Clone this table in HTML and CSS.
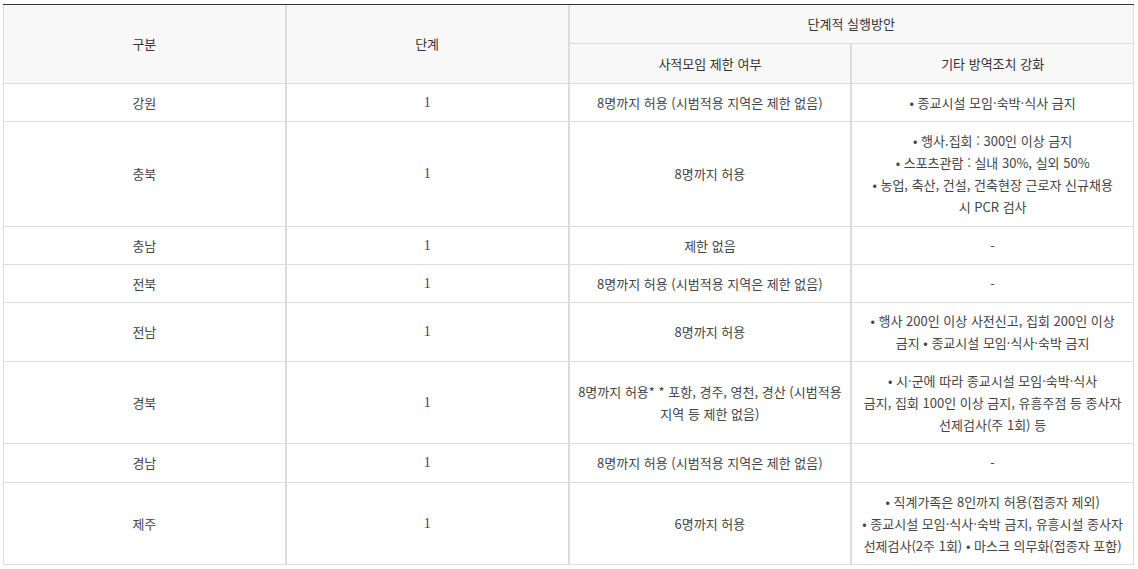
FILE: index.html
```html
<!DOCTYPE html>
<html lang="ko">
<head>
<meta charset="utf-8">
<title>단계적 실행방안</title>
<link rel="stylesheet" href="styles.css">
</head>
<body>
<table class="tbl">
  <colgroup><col class="c"><col class="c"><col class="c"><col class="c"></colgroup>
  <thead>
    <tr class="h1">
      <th rowspan="2">구분</th>
      <th rowspan="2">단계</th>
      <th colspan="2">단계적 실행방안</th>
    </tr>
    <tr class="h2">
      <th>사적모임 제한 여부</th>
      <th>기타 방역조치 강화</th>
    </tr>
  </thead>
  <tbody>
    <tr class="r38">
      <td>강원</td><td class="num">1</td>
      <td>8명까지 허용 (시범적용 지역은 제한 없음)</td>
      <td>• 종교시설 모임·숙박·식사 금지</td>
    </tr>
    <tr class="r105">
      <td>충북</td><td class="num">1</td>
      <td>8명까지 허용</td>
      <td>• 행사.집회 : 300인 이상 금지<br>• 스포츠관람 : 실내 30%, 실외 50%<br>• 농업, 축산, 건설, 건축현장 근로자 신규채용<br>시 PCR 검사</td>
    </tr>
    <tr class="r38">
      <td>충남</td><td class="num">1</td>
      <td>제한 없음</td>
      <td>-</td>
    </tr>
    <tr class="r38">
      <td>전북</td><td class="num">1</td>
      <td>8명까지 허용 (시범적용 지역은 제한 없음)</td>
      <td>-</td>
    </tr>
    <tr class="r59">
      <td>전남</td><td class="num">1</td>
      <td>8명까지 허용</td>
      <td>• 행사 200인 이상 사전신고, 집회 200인 이상<br>금지 • 종교시설 모임·식사·숙박 금지</td>
    </tr>
    <tr class="r82">
      <td>경북</td><td class="num">1</td>
      <td>8명까지 허용* * 포항, 경주, 영천, 경산 (시범적용<br>지역 등 제한 없음)</td>
      <td>• 시·군에 따라 종교시설 모임·숙박·식사<br>금지, 집회 100인 이상 금지, 유흥주점 등 종사자<br>선제검사(주 1회) 등</td>
    </tr>
    <tr class="r39">
      <td>경남</td><td class="num">1</td>
      <td>8명까지 허용 (시범적용 지역은 제한 없음)</td>
      <td>-</td>
    </tr>
    <tr class="r82">
      <td>제주</td><td class="num">1</td>
      <td>6명까지 허용</td>
      <td>• 직계가족은 8인까지 허용(접종자 제외)<br>• 종교시설 모임·식사·숙박 금지, 유흥시설 종사자<br>선제검사(2주 1회) • 마스크 의무화(접종자 포함)</td>
    </tr>
  </tbody>
</table>
</body>
</html>
```

FILE: styles.css
```css
html, body {
  margin: 0;
  padding: 0;
  background: #fff;
}
body {
  padding: 4px 0 0 3px;
  font-family: "Noto Sans CJK KR", "Noto Sans", sans-serif;
  font-size: 13px;
  color: #444;
}
.tbl {
  width: 1131px;
  table-layout: fixed;
  border-collapse: separate;
  border-spacing: 0;
  border-top: 1px solid #333;
}
.tbl .c {
  width: 25%;
}
.tbl th,
.tbl td {
  box-sizing: border-box;
  text-align: center;
  vertical-align: middle;
  border-bottom: 1px solid #dcdcdc;
  border-left: 1px solid #dcdcdc;
  border-right: 1px solid #dcdcdc;
  padding: 0 6px;
  line-height: 22px;
  white-space: nowrap;
}
.tbl th {
  background: #f8f8f8;
  font-weight: normal;
  color: #333;
}
.tbl .h1 th { height: 39px; }
.tbl .h2 th { height: 40px; }
.tbl .h1 th[rowspan] { height: 79px; }
.tbl td.num {
  font-family: "Liberation Serif", "DejaVu Serif", serif;
  font-size: 14px;
}
.tbl .r38 td { height: 38px; }
.tbl .r39 td { height: 39px; }
.tbl .r59 td { height: 59px; }
.tbl .r82 td { height: 82px; }
.tbl .r105 td { height: 105px; }
```
